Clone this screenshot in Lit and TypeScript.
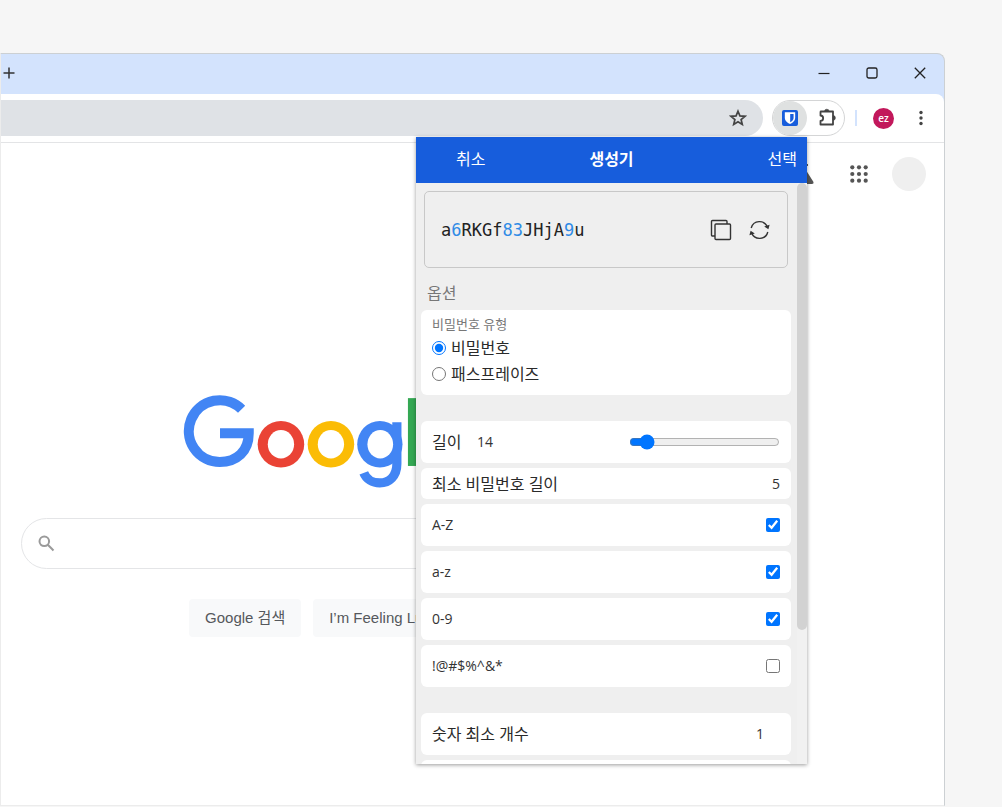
import { LitElement, html, svg, css } from "lit";
import { customElement, property, state } from "lit/decorators.js";

const CHARACTER_SETS = [
  { id: "upper", label: "A-Z", checked: true },
  { id: "lower", label: "a-z", checked: true },
  { id: "digits", label: "0-9", checked: true },
  { id: "special", label: "!@#$%^&*", checked: false },
];

@customElement("password-generator")
class PasswordGenerator extends LitElement {
  static styles = css`
    :host {
      display: flex;
      flex-direction: column;
      background: #efefef;
      color: #333;
      font: 14px/20px "Open Sans", "Noto Sans CJK KR", sans-serif;
      box-shadow: 0 1px 4px rgba(0, 0, 0, 0.4);
      overflow: hidden;
    }
    * { box-sizing: border-box; }
    button {
      border: 0;
      padding: 0;
      background: none;
      color: inherit;
      font: inherit;
      cursor: pointer;
    }
    .bar {
      flex: none;
      display: grid;
      grid-template-columns: 1fr auto 1fr;
      align-items: center;
      height: 46px;
      padding: 0 10px 2px 40px;
      background: #175ddc;
      color: #fff;
    }
    .bar button, .bar h1 { margin: 0; font-size: 16px; line-height: 24px; }
    .bar button:first-child { justify-self: start; }
    .bar button:last-child { justify-self: end; }
    .bar h1 { padding-right: 30px; font-weight: 700; }
    .scroller { flex: 1; min-height: 0; display: flex; }
    .content {
      flex: 1;
      min-width: 0;
      padding: 8px 6px 0 5px;
      overflow: hidden;
    }
    .rail { flex: none; width: 10px; background: #f1f1f1; }
    .thumb { height: 77%; border-radius: 5px; background: #d2d2d2; }
    .result {
      display: flex;
      align-items: center;
      gap: 17px;
      height: 77px;
      margin: 0 3px;
      padding: 0 17px 0 16px;
      border: 1px solid #c8c8c8;
      border-radius: 5px;
    }
    .password {
      flex: 1;
      color: #222;
      font: 17px/24px "DejaVu Sans Mono", monospace;
    }
    .password .digit { color: #2f8be6; }
    .result svg { display: block; }
    h2 {
      margin: 13px 6px 5px;
      color: #777;
      font-size: 16px;
      font-weight: 400;
      line-height: 24px;
    }
    .card {
      display: flex;
      align-items: center;
      min-height: 42px;
      margin: 0 0 5px;
      padding: 0 11px;
      border: 0;
      border-radius: 6px;
      background: #fff;
    }
    .card.short { min-height: 31px; }
    .card.last { margin-bottom: 26px; }
    .card label { flex: 1; }
    .ko { color: #2a2a2a; font-size: 16px; }
    .type {
      display: block;
      min-height: 85px;
      margin-bottom: 26px;
      padding: 3px 10px 8px 11px;
    }
    .caption { color: #777; font-size: 13px; line-height: 22px; }
    .choice { display: flex; align-items: center; gap: 5px; height: 26px; }
    input { margin: 0; accent-color: #0075ff; }
    input[type="radio"], input[type="checkbox"] { width: 14px; height: 14px; }
    .card .length { flex: none; width: 45px; }
    output.size { flex: 1; }
    input[type="range"] { width: 151px; }
    input[type="number"] {
      width: 60px;
      padding: 0 16px 0 0;
      border: 0;
      background: none;
      color: inherit;
      font: inherit;
      text-align: right;
      appearance: textfield;
    }
    input::-webkit-inner-spin-button { display: none; }
  `;

  @property() password = "a6RKGf83JHjA9u";
  @state() private size = 14;

  render() {
    return html`
      <header class="bar">
        <button type="button">취소</button>
        <h1>생성기</h1>
        <button type="button">선택</button>
      </header>
      <div class="scroller">
        <div class="content">
          <div class="result">
            <div class="password">${[...this.password].map((c) =>
              /\d/.test(c) ? html`<span class="digit">${c}</span>` : c)}</div>
            <button type="button" aria-label="비밀번호 복사">
              <svg width="22" height="22" viewBox="0 0 22 22" fill="none" stroke="#333" stroke-width="1.4">
                <rect x="5" y="5" width="15.500" height="15.500" rx="1" />
                <path d="M5 17H2.500A1 1 0 0 1 1.500 16V2.500A1 1 0 0 1 2.500 1.500H16A1 1 0 0 1 17 2.500V5" />
              </svg>
            </button>
            <button type="button" aria-label="비밀번호 재생성">
              <svg width="21" height="20" viewBox="0 0 21 20" fill="none" stroke="#333" stroke-width="1.4">
                <path d="M2.200 8A8.500 8.500 0 0 1 18.400 7.200M18.800 12A8.500 8.500 0 0 1 2.600 12.800" />
                <path d="M15.200 6.400L20.600 4.800L19.400 9.200ZM5.800 13.600L.4 15.200L1.600 10.800Z" fill="#333" stroke="none" />
              </svg>
            </button>
          </div>

          <h2>옵션</h2>
          <div class="card type" role="radiogroup" aria-labelledby="type">
            <div class="caption" id="type">비밀번호 유형</div>
            <div class="choice">
              <input type="radio" name="type" id="t-password" checked />
              <label class="ko" for="t-password">비밀번호</label>
            </div>
            <div class="choice">
              <input type="radio" name="type" id="t-phrase" />
              <label class="ko" for="t-phrase">패스프레이즈</label>
            </div>
          </div>

          <div class="card">
            <label class="ko length" for="length">길이</label>
            <output class="size" for="length">${this.size}</output>
            <input type="range" id="length" min="5" max="128" .value=${String(this.size)}
              @input=${(e: Event) => (this.size = Number((e.target as HTMLInputElement).value))} />
          </div>
          <div class="card short">
            <label class="ko" for="minimum">최소 비밀번호 길이</label>
            <output id="minimum">5</output>
          </div>
          ${CHARACTER_SETS.map((s) => html`
            <div class="card ${s.id === "special" ? "last" : ""}">
              <label for=${s.id}>${s.label}</label>
              <input type="checkbox" id=${s.id} ?checked=${s.checked} />
            </div>`)}
          <div class="card">
            <label class="ko" for="min-digits">숫자 최소 개수</label>
            <input type="number" id="min-digits" value="1" />
          </div>
          <div class="card"></div>
        </div>
        <div class="rail"><div class="thumb"></div></div>
      </div>
    `;
  }
}

@customElement("search-page")
class SearchPage extends LitElement {
  static styles = css`
    :host {
      display: block;
      font: 15px/20px "Liberation Sans", "Noto Sans CJK KR", sans-serif;
      background: #fff;
      overflow: hidden;
    }
    * { box-sizing: border-box; }
    svg { display: block; }
    nav {
      display: flex;
      justify-content: flex-end;
      align-items: center;
      padding: 14px 18px 0;
    }
    nav button, nav a { padding: 0; border: 0; background: none; }
    .labs { margin-right: 36px; }
    .apps { margin-right: 24px; }
    .account { width: 34px; height: 34px; border-radius: 50%; background: #efefef; }
    main {
      display: flex;
      flex-direction: column;
      align-items: center;
      width: 609px;
      max-width: 100%;
      margin: 204px 0 0 20px;
    }
    .search {
      display: flex;
      align-items: center;
      gap: 14px;
      width: 100%;
      height: 51px;
      margin: 27px 0 30px;
      padding: 0 16px;
      border: 1px solid #e4e5e7;
      border-radius: 26px;
    }
    .search input { flex: 1; border: 0; outline: 0; background: none; font: inherit; }
    .actions { display: flex; gap: 12px; }
    .actions button {
      height: 38px;
      padding: 0 16px;
      border: 0;
      border-radius: 4px;
      background: #f8f9fa;
      color: #55585c;
      font: inherit;
    }
  `;

  render() {
    return html`
      <nav>
        <a class="labs" href="#" aria-label="Labs">
          <svg width="20" height="20" viewBox="0 0 20 20" fill="#555"><path d="M6 0H14V2H12.500V7L19.500 18Q20 20 18 20H2Q0 20 .5 18L7.500 7V2H6Z" /></svg>
        </a>
        <button class="apps" type="button" aria-label="Google 앱">
          <svg width="18" height="18" viewBox="0 0 18 18" fill="#555">
            ${[2.3, 9, 15.7].map((y) => [2.3, 9, 15.7].map((x) =>
              svg`<circle cx=${x} cy=${y} r="2.1" />`))}
          </svg>
        </button>
        <div class="account"></div>
      </nav>
      <main>
        <svg role="img" aria-label="Google" width="285" height="96" viewBox="0 0 272 92" fill="none" stroke-width="9.7">
          <path stroke="#4285f4" d="M55.600 13.700A29.600 29.600 0 1 0 34.600 64.200C51 64.200 62.400 54 62.400 36.600H34.900" />
          <ellipse cx="93.300" cy="47.200" rx="22.300" ry="22.200" fill="#ea4335" />
          <ellipse cx="93.300" cy="47.200" rx="12.600" ry="13.600" fill="#fff" />
          <ellipse cx="141.200" cy="47.200" rx="22.300" ry="22.200" fill="#fbbc05" />
          <ellipse cx="141.200" cy="47.200" rx="12.600" ry="13.600" fill="#fff" />
          <ellipse cx="188.100" cy="47.200" rx="21.700" ry="22.200" fill="#4285f4" />
          <path stroke="#4285f4" stroke-width="8.800" d="M204.400 26V66C204.400 78 197 84.300 188 84.300C181 84.300 175 80.500 172.700 74.600" />
          <ellipse cx="188.500" cy="47.200" rx="12.300" ry="13.600" fill="#fff" />
          <rect x="215" y="3" width="9.500" height="65" fill="#34a853" />
          <path stroke="#ea4335" d="M235 53L264 41C260 31 250 27 243 32C231 40 234 64 250 64.500C257 64.500 262 61 265 56" />
        </svg>
        <form class="search" role="search">
          <svg width="17" height="17" viewBox="0 0 17 17" fill="none" stroke="#9a9a9a" stroke-width="2">
            <circle cx="6.300" cy="6.300" r="4.800" /><path d="M9.800 9.800L15.500 15.500" />
          </svg>
          <input type="text" aria-label="검색" />
        </form>
        <div class="actions">
          <button type="button">Google 검색</button>
          <button type="button">I’m Feeling Lucky</button>
        </div>
      </main>
    `;
  }
}

@customElement("app-root")
class AppRoot extends LitElement {
  static styles = css`
    :host {
      display: block;
      box-sizing: border-box;
      height: 100vh;
      padding: 53px 57px 1px 0;
      background: #f6f6f6;
      overflow: hidden;
      font: 14px/20px "Open Sans", "Noto Sans CJK KR", sans-serif;
    }
    * { box-sizing: border-box; }
    svg { display: block; }
    button { display: grid; place-items: center; padding: 0; border: 0; background: none; }
    .window {
      position: relative;
      display: flex;
      flex-direction: column;
      height: 100%;
      border: 1px solid #ccd0d3;
      border-left-color: #ececec;
      border-bottom-color: #ececec;
      border-radius: 0 8px 0 0;
      background: #d3e3fd;
    }
    .tabs { flex: none; display: flex; height: 40px; padding-bottom: 2px; }
    .new-tab { width: 16px; margin-right: auto; }
    .control { width: 48px; }
    .toolbar {
      flex: none;
      display: flex;
      align-items: center;
      height: 49px;
      padding-right: 13px;
      border-bottom: 1px solid #e3e4e6;
      border-radius: 0 8px 0 0;
      background: #fff;
    }
    .address {
      flex: 1;
      display: flex;
      align-items: center;
      height: 36px;
      padding-right: 16px;
      border-radius: 0 18px 18px 0;
      background: #dfe2e6;
    }
    .address input { flex: 1; min-width: 0; border: 0; outline: 0; background: none; }
    .extensions {
      display: flex;
      width: 73px;
      height: 36px;
      margin: 0 10px 0 9px;
      border: 1px solid #d4d5d6;
      border-radius: 18px;
    }
    .extensions button { flex: 1; }
    .extensions .active { flex: none; width: 34px; border-radius: 50%; background: #dfe1e1; }
    .divider { width: 2px; height: 16px; margin-right: 16px; background: #d3e3fd; }
    .profile {
      width: 21px;
      height: 21px;
      margin-right: 17px;
      border-radius: 50%;
      background: #c2185b;
      color: #fff;
      font: 600 10px/20px "Open Sans", sans-serif;
    }
    .menu { width: 20px; height: 20px; }
    search-page { flex: 1; min-height: 0; }
    .popup { position: absolute; top: 83px; right: 137px; bottom: 41px; width: 391px; }
  `;

  render() {
    return html`
      <div class="window">
        <div class="tabs">
          <button class="new-tab" type="button" aria-label="새 탭">
            <svg width="12" height="12" viewBox="0 0 12 12" stroke="#333" stroke-width="1.5"><path d="M6 .5V11.500M.5 6H11.500" /></svg>
          </button>
          <button class="control" type="button" aria-label="최소화">
            <svg width="12" height="12" viewBox="0 0 12 12" stroke="#222" stroke-width="1.200"><path d="M.5 6.500H11.500" /></svg>
          </button>
          <button class="control" type="button" aria-label="최대화">
            <svg width="12" height="12" viewBox="0 0 12 12" fill="none" stroke="#222" stroke-width="1.300"><rect x="1" y="1" width="10" height="10" rx="1.800" /></svg>
          </button>
          <button class="control" type="button" aria-label="닫기">
            <svg width="12" height="12" viewBox="0 0 12 12" stroke="#222" stroke-width="1.300"><path d="M.8 .8L11.200 11.200M11.200 .8L.8 11.200" /></svg>
          </button>
        </div>
        <div class="toolbar">
          <div class="address">
            <input type="text" aria-label="주소" />
            <button type="button" aria-label="북마크">
              <svg width="18" height="18" viewBox="0 0 18 18" fill="none" stroke="#444" stroke-width="1.700">
                <path d="M9 2.200L10.900 6.900L16 7.300L12.100 10.500L13.300 15.500L9 12.800L4.700 15.500L5.900 10.500L2 7.300L7.100 6.900Z" />
              </svg>
            </button>
          </div>
          <div class="extensions">
            <button class="active" type="button" aria-label="Bitwarden">
              <svg width="16" height="16" viewBox="0 0 17 17">
                <rect width="17" height="17" rx="2" fill="#175ddc" />
                <path fill="#fff" d="M3 2.500H14V8.500C14 11.500 11.500 13.500 8.500 15C5.500 13.500 3 11.500 3 8.500Z" />
                <path fill="#175ddc" d="M8.700 4.200H12.300V8.500C12.300 10.500 10.600 12 8.700 13Z" />
              </svg>
            </button>
            <button type="button" aria-label="확장 프로그램">
              <svg width="22" height="20" viewBox="-3 0 22 20" fill="none" stroke="#444" stroke-width="1.800">
                <path d="M3 3.500H15V16.500H2.500V12.800A2.600 2.600 0 0 0 2.500 7.500V4Q2.500 3.500 3 3.500Z" stroke-linejoin="round" />
                <path d="M6.500 3.500A2.300 2.300 0 0 1 11.100 3.500ZM15 7.500A2.400 2.400 0 0 1 15 12.300Z" fill="#444" stroke="#444" stroke-width=".6" />
              </svg>
            </button>
          </div>
          <div class="divider"></div>
          <button class="profile" type="button">ez</button>
          <button class="menu" type="button" aria-label="메뉴">
            <svg width="4" height="16" viewBox="0 0 4 16" fill="#444"><circle cx="2" cy="2.500" r="1.700" /><circle cx="2" cy="8" r="1.700" /><circle cx="2" cy="13.500" r="1.700" /></svg>
          </button>
        </div>
        <search-page></search-page>
        <password-generator class="popup"></password-generator>
      </div>
    `;
  }
}
